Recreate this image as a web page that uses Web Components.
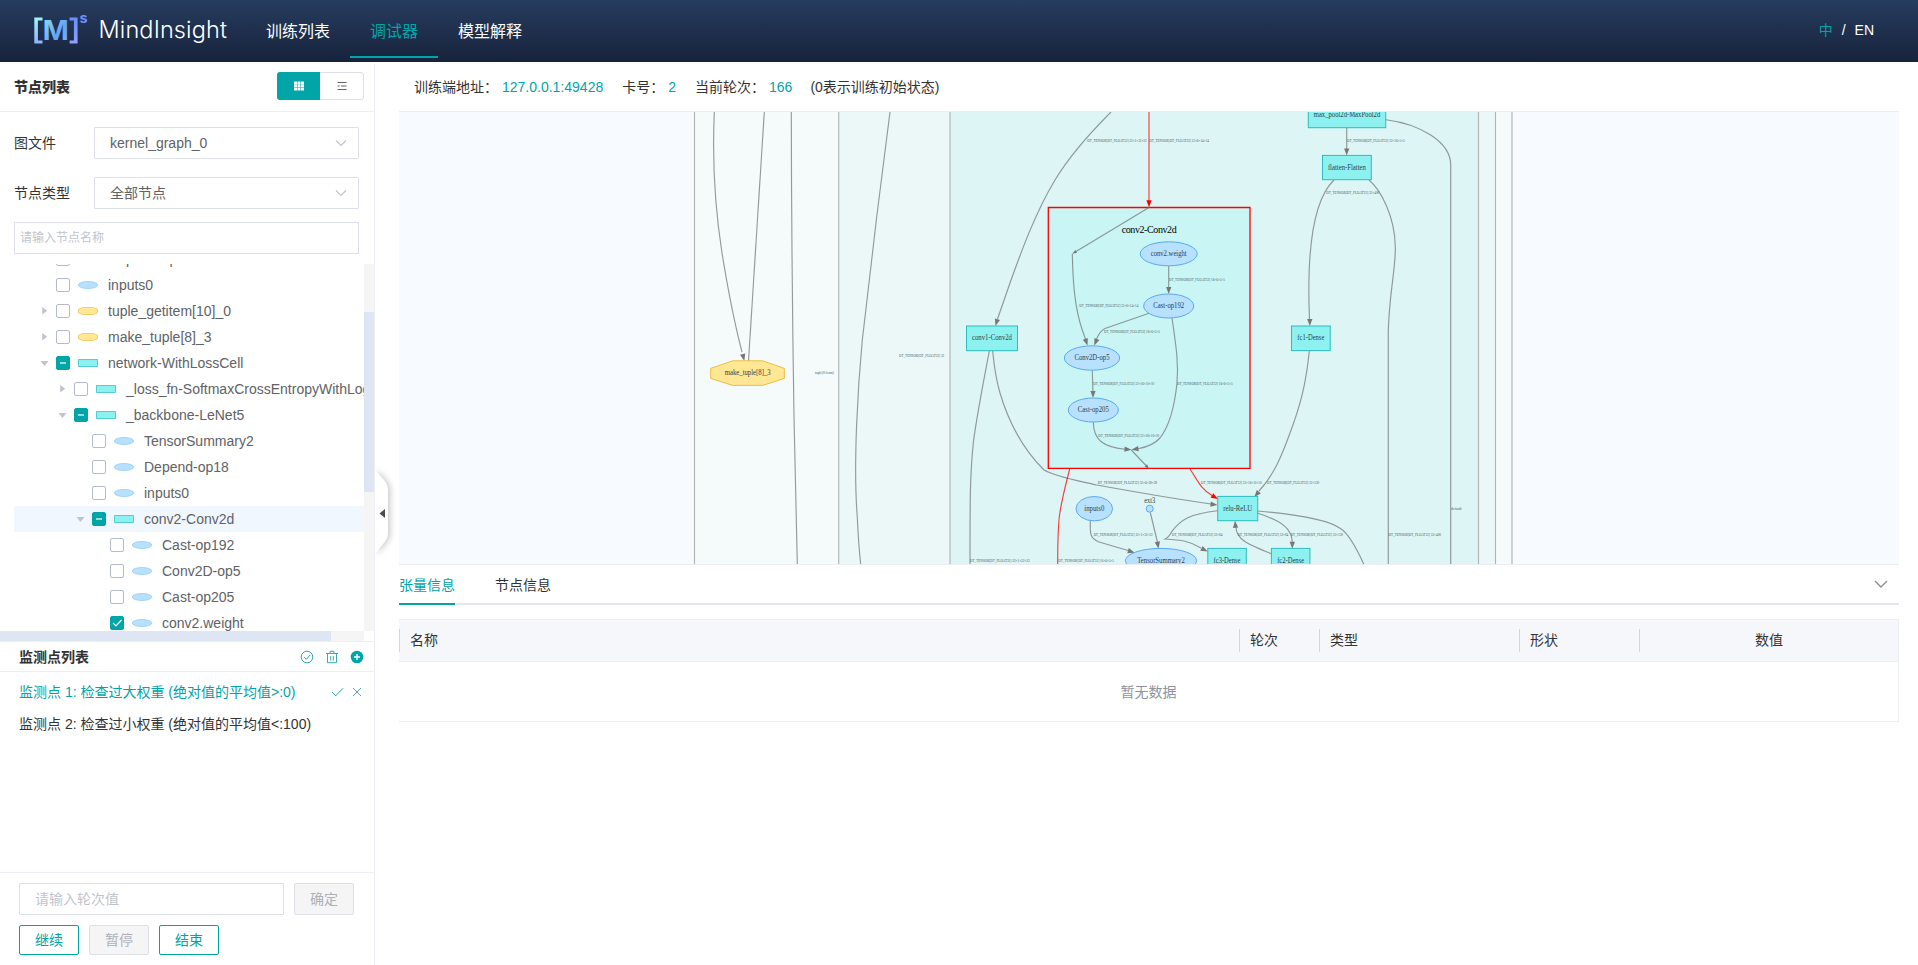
<!DOCTYPE html>
<html lang="zh-CN">
<head>
<meta charset="utf-8">
<title>MindInsight</title>
<style>
html,body{margin:0;height:100%;overflow:hidden}
body{font:14px/20px "Liberation Sans","Noto Sans CJK SC",sans-serif;color:#333;background:#fff;--teal:#00a5a7;--line:#ebeef5;--edge:#dcdfe6}
</style>
</head>
<body>
<mi-app></mi-app>
<script>
const define = (name, html, setup) => {
  const t = document.createElement('template');
  t.innerHTML = html;
  customElements.define(name, class extends HTMLElement {
    connectedCallback() {
      if (this.shadowRoot) return;
      const root = this.attachShadow({mode: 'open'});
      root.append(t.content.cloneNode(true));
      if (setup) setup.call(this, root);
    }
  });
};

define('mi-header', `
<style>
:host{display:flex;align-items:center;height:62px;background:linear-gradient(#273c5f,#17233b);color:#fff;font-size:16px}
.logo{width:246px;height:62px;flex:none}
nav{display:flex;height:62px;flex:1}
nav span{box-sizing:border-box;padding:2px 20px 0;line-height:60px;height:58px;border-bottom:2px solid transparent;white-space:nowrap}
nav .on{color:var(--teal);border-color:var(--teal)}
.lang{display:flex;font-size:14px;line-height:60px;margin-right:44px;gap:9px;height:62px}
.lang b{font-weight:400;color:var(--teal)}
</style>
<svg class="logo" viewBox="0 0 246 62">
 <defs>
  <linearGradient id="a" x1="0" y1="0" x2="0" y2="1"><stop stop-color="#9ff5f7"/><stop offset="1" stop-color="#8fb4fb"/></linearGradient>
  <linearGradient id="m" x1="0" y1="0" x2="1" y2="1"><stop stop-color="#93e3f5"/><stop offset=".6" stop-color="#66a5f2"/><stop offset="1" stop-color="#7fb0f8"/></linearGradient>
  <linearGradient id="c" x1="0" y1="0" x2="0" y2="1"><stop stop-color="#6790f8"/><stop offset="1" stop-color="#8ea0fb"/></linearGradient>
 </defs>
 <path d="M34.300 17.400h8.200v3h-4.600v20.200h4.600v3h-8.200z" fill="url(#a)"/>
 <path d="M77.600 17.400h-8v3h4.300v20.200h-4.300v3h8z" fill="url(#c)"/>
 <text x="42.700" y="39.800" font-family="Inter" font-weight="700" font-size="27" textLength="26" lengthAdjust="spacingAndGlyphs" fill="url(#m)">M</text>
 <text x="79.400" y="23.200" font-family="Inter" font-weight="700" font-size="14.500" fill="#718ffa">s</text>
 <text x="98.500" y="38" font-family="Inter" font-weight="300" font-size="23.500" textLength="128.500" fill="#fff">MindInsight</text>
</svg>
<nav><span>训练列表</span><span class="on">调试器</span><span>模型解释</span></nav>
<div class="lang"><b>中</b><span>/</span><span>EN</span></div>`);

define('mi-select', `
<style>
:host{display:flex;align-items:center;height:32px}
label{width:80px}
div{box-sizing:border-box;flex:1;height:32px;border:1px solid var(--edge);border-radius:1px;display:flex;align-items:center;justify-content:space-between;padding:0 10px 0 15px;color:#606266}
</style>
<label></label><div><slot></slot><svg width="14" height="14" fill="none" stroke="#c0c4cc" stroke-width="1.1"><path d="M2 4.500l5 5 5-5"/></svg></div>`,
function(r){ r.querySelector('label').textContent = this.getAttribute('label'); });

define('mi-node', `
<style>
:host{display:flex;align-items:center;height:26px;color:#606266;white-space:nowrap}
:host([current]){background:#f0f7ff}
.caret{width:24px;height:14px;flex:none}
.box{width:12px;height:12px;flex:none;border:1px solid #b4bccc;border-radius:2px;background:#fff;margin-right:8px}
.box svg{display:none;margin:-1px}
:host([state]) .box{background:var(--teal);border-color:var(--teal)}
:host([state]) .box svg{display:block}
.shape{width:20px;height:14px;margin-right:10px;flex:none}
</style>
<svg class="caret" viewBox="0 0 24 14" fill="#c0c4cc"></svg>
<span class="box"><svg width="14" height="14" fill="none" stroke="#fff"></svg></span>
<svg class="shape" viewBox="0 0 20 14"></svg><slot></slot>`,
function(r){
  this.style.paddingLeft = (18 + 18 * this.getAttribute('level')) + 'px';
  r.querySelector('.caret').innerHTML = {open:'<path d="M8.500 5h8l-4 5z"/>', closed:'<path d="M10.200 3l5 3.700-5 3.700z"/>'}[this.getAttribute('caret')] || '';
  r.querySelector('.box svg').innerHTML = {part:'<path d="M4 7h6" stroke-width="2" stroke="#9adbdc"/>', full:'<path d="M3 7l3 3 5.500-6" stroke-width="1.200"/>'}[this.getAttribute('state')] || '';
  r.querySelector('.shape').innerHTML = {
    op:'<ellipse cx="10" cy="7" rx="9.700" ry="3.500" fill="#b8e0ff" stroke="#94cdf7" stroke-width=".8"/>',
    tuple:'<path d="M.5 5.300L4.500 3.500h11l4 1.800v3.400l-4 1.800h-11l-4-1.800z" fill="#ffe794" stroke="#f2cf68"/>',
    scope:'<path d="M.5 3.500h19v7H.5z" fill="#8df1f0" stroke="#53cfcf"/>'}[this.getAttribute('kind')];
});

define('mi-tree', `
<style>
:host{display:grid;grid-template:367px 10px / 364px 10px;height:377px}
.rows{overflow:hidden;padding-left:14px}
.rows div{margin-top:-18px}
.v{background:#f5f5f5;padding-top:48px}.v i{display:block;height:180px;background:#dfe6f3}
.h{background:#f5f5f5}.h i{display:block;width:331px;height:10px;background:#dfe6f3}
</style>
<div class="rows"><div>
<mi-node level="0" kind="op">Depend-op</mi-node>
<mi-node level="0" kind="op">inputs0</mi-node>
<mi-node level="0" kind="tuple" caret="closed">tuple_getitem[10]_0</mi-node>
<mi-node level="0" kind="tuple" caret="closed">make_tuple[8]_3</mi-node>
<mi-node level="0" kind="scope" caret="open" state="part">network-WithLossCell</mi-node>
<mi-node level="1" kind="scope" caret="closed">_loss_fn-SoftmaxCrossEntropyWithLogits</mi-node>
<mi-node level="1" kind="scope" caret="open" state="part">_backbone-LeNet5</mi-node>
<mi-node level="2" kind="op">TensorSummary2</mi-node>
<mi-node level="2" kind="op">Depend-op18</mi-node>
<mi-node level="2" kind="op">inputs0</mi-node>
<mi-node level="2" kind="scope" caret="open" state="part" current>conv2-Conv2d</mi-node>
<mi-node level="3" kind="op">Cast-op192</mi-node>
<mi-node level="3" kind="op">Conv2D-op5</mi-node>
<mi-node level="3" kind="op">Cast-op205</mi-node>
<mi-node level="3" kind="op" state="full">conv2.weight</mi-node>
</div></div><div class="v"><i></i></div><div class="h"><i></i></div>`);

define('mi-button', `
<style>
:host{box-sizing:border-box;display:flex;align-items:center;justify-content:center;width:60px;height:30px;border:1px solid var(--teal);border-radius:2px;color:var(--teal)}
:host([disabled]){border-color:var(--edge);background:#f5f5f5;color:#adb0b8}
:host([tall]){height:32px}
</style><slot></slot>`);

define('mi-watchpoints', `
<style>
:host{display:flex;flex-direction:column;border-top:1px solid var(--line)}
header{display:flex;align-items:center;justify-content:space-between;height:29px;padding:0 10px 0 19px;border-bottom:1px solid var(--line);font-weight:700}
header div{display:flex;gap:11px}
svg{display:block}
.row{display:flex;align-items:center;justify-content:space-between;height:32px;padding:0 12px 0 19px}
.row.on{color:var(--teal);margin-top:4px}
.row div{display:flex;gap:8px}
</style>
<header>监测点列表<div>
<svg width="14" height="14" fill="none" stroke="#2fa9ab"><circle cx="7" cy="7" r="5.800"/><path d="M4 7l2.300 2.300L10.200 5"/></svg>
<svg width="14" height="14" fill="none" stroke="#3aabad"><path d="M1 3.500h12M5 3V1.300h4V3M2.500 3.500v9.200h9V3.500M5.700 6v4.500M8.300 6v4.500"/></svg>
<svg width="14" height="14" fill="none"><circle cx="7" cy="7" r="6.300" fill="#00a5a7"/><path d="M7 4v6M4 7h6" stroke="#fff" stroke-width="1.300"/></svg>
</div></header>
<div class="row on"><span>监测点 1: 检查过大权重 (绝对值的平均值&gt;:0)</span><div>
<svg width="14" height="12" fill="none" stroke="#2fa0a2"><path d="M2 6l3.700 3.800L13 2.300"/></svg>
<svg width="10" height="12" fill="none" stroke="#5fa5a7"><path d="M1 2l8 8M9 2l-8 8"/></svg></div></div>
<div class="row"><span>监测点 2: 检查过小权重 (绝对值的平均值&lt;:100)</span></div>`);

define('mi-sidebar', `
<style>
:host{display:flex;flex-direction:column;box-sizing:border-box;width:375px;border-right:1px solid var(--line);margin-top:2px}
.top{display:flex;align-items:center;justify-content:space-between;height:47px;padding:0 10px 0 14px;border-bottom:1px solid var(--line);font-weight:700}
.top b{margin-top:-2px}
.toggle{display:flex;box-sizing:border-box;width:87px;height:28px;margin-top:-3px;border:1px solid var(--edge);border-radius:3px}
.toggle span{flex:1;display:flex;align-items:center;justify-content:center}
.toggle .on{background:var(--teal);margin:-1px 0 -1px -1px;border-radius:3px 0 0 3px}
.form{display:flex;flex-direction:column;padding:15px 15px 10px 14px;gap:18px}
.search{height:30px;border:1px solid var(--edge);margin-top:-5px;font-size:12px;line-height:30px;padding-left:5px;color:#c0c4cc}
mi-watchpoints{flex:1}
.foot{border-top:1px solid var(--line);height:82px;padding:10px 0 0 19px;display:flex;flex-direction:column;gap:10px}
.foot div{display:flex;gap:10px}
.foot .input{box-sizing:border-box;width:265px;height:32px;border:1px solid var(--edge);border-radius:1px;line-height:30px;padding-left:15px;color:#c0c4cc}
</style>
<div class="top"><b>节点列表</b><div class="toggle">
<span class="on"><svg width="12" height="10" fill="#fff"><path d="M1 .5h3v2.700H1zM4.500 .5h3v2.700h-3zM8 .5h3v2.700h-3zM1 3.600h3v2.700H1zM4.500 3.600h3v2.700h-3zM8 3.600h3v2.700h-3zM1 6.700h3v2.700H1zM4.500 6.700h3v2.700h-3zM8 6.700h3v2.700h-3z"/></svg></span>
<span><svg width="10" height="8" stroke="#606266" fill="none"><path d="M.5 .5h9M4 4h5.500M.5 7.500h9M.5 4H2.500"/></svg></span></div></div>
<div class="form"><mi-select label="图文件">kernel_graph_0</mi-select><mi-select label="节点类型">全部节点</mi-select><div class="search">请输入节点名称</div></div>
<mi-tree></mi-tree>
<mi-watchpoints></mi-watchpoints>
<div class="foot"><div><span class="input">请输入轮次值</span><mi-button disabled tall>确定</mi-button></div>
<div><mi-button>继续</mi-button><mi-button disabled>暂停</mi-button><mi-button>结束</mi-button></div></div>`);

define('mi-graph', `
<style>
:host{display:block;height:452px;background:#f7faff;border:solid var(--line);border-width:1px 0}
svg{display:block;font-family:"Liberation Serif",serif}
.e path{fill:none;stroke:#6f7474;stroke-width:1.150;stroke-opacity:.72}
.e .r{stroke:#f00;stroke-opacity:.75}
.e .a{fill:#777;stroke:none}.e .ar{fill:#f00;stroke:none}
.n rect{fill:#8df1f0;stroke:#1eb6b8;stroke-opacity:.9}
.n ellipse,.n circle{fill:#b8e0ff;stroke:#5aaaf0}
.n text{font-size:7.200px;text-anchor:middle;fill:#2b4348}
.l text{font-size:3.400px;fill:#4a5a5e}
</style>
<svg width="1500" height="452" viewBox="399 112 1500 452">
<g stroke="#b0b4b4" stroke-width="1.150">
<path d="M694.500 90H1512V600H694.500z" fill="#f5fbfa"/>
<path d="M838.700 90H1495.500V600H838.700z" fill="#ecf8f8"/>
<path d="M950 90H1478.500V600H950z" fill="#ddf5f4"/>
</g>
<path d="M1048.300 207.500H1250V468.400H1048.300z" fill="#c9f5f4" stroke="#f00" stroke-width="1.300"/>
<g class="e"></g><g class="n"></g><g class="l"></g>
<text x="1149.200" y="233.400" font-size="10" text-anchor="middle" textLength="55">conv2-Conv2d</text>
</svg>`,
function(r){
  // [path, class, arrow tip x, y, direction x, y, length]
  const edges = [
    ['M714.300 112C712 165 716 215 722 253C728 290 735 325 742 352','',744.3,361,2.2,9,7],
    ['M764.300 112Q757 220 748.500 361'],
    ['M791.300 112Q791.500 260 794 417L797.300 564'],
    ['M890 112L876.700 217L862.300 340C858 385 853 465 857.300 517Q858.500 545 860.700 564'],
    ['M1111 112C1092 131 1070 155 1055 180C1035 213 1020 255 1010 283L997.500 319','',995.5,326,-2,7,7],
    ['M989.300 351C982 390 976 420 973.300 443C970 475 970 500 970 564'],
    ['M992.700 351Q995 376 1000 393C1008 420 1022 448 1044 470C1056 477 1080 481 1096.700 485C1130 491 1175 499 1211 504','',1217.5,505,7,1,7],
    ['M1149 112V202','r',1149,207.3,0,1,7],
    ['M1149 207.500L1076 251.500','',1072.3,253.7,-3.7,2.2,4.5],
    ['M1072.300 253.700C1073 295 1077 318 1085.500 339','',1087.5,345.5,2,6,7],
    ['M1168.700 266V288','',1168.7,294,0,1,7],
    ['M1149 313.300L1105 328.500Q1100 331 1096.500 339','',1094.3,345.5,-2.4,6,7],
    ['M1172 318C1177 352 1178.500 365 1177 383C1174 412 1167 429 1160 438Q1153 446 1138 448.700','',1131.5,449.7,-6.5,1,7],
    ['M1092.300 370.500L1092.900 392','',1093,398,0,1,7],
    ['M1093.300 422C1093.500 440 1103 447 1125 449.200','',1131.5,449.8,7,.7,7],
    ['M1131.300 450L1146 465.500','',1149,468.7,3,3,4.5],
    ['M1190 469C1198 481 1200 488 1212 495.500','r',1218,499,6,3.5,7],
    ['M1069.700 469C1065 487 1062 499 1060 512Q1057.700 525 1057.700 564','r'],
    ['M1090.300 520.700C1090 534 1090 538 1098.300 541.700Q1113 546 1128 550.500','',1134.7,552.7,7,2.2,7],
    ['M1150.300 512.500L1157.400 542','',1158.5,548.7,1,6,7],
    ['M1217.700 510.700C1190 514 1181 519 1171.700 531.700Q1169 537 1165 539C1181 540 1190 541 1201 548','',1207.7,551.5,6,3,7],
    ['M1258 513.300C1282 521 1292 529 1292.300 542','',1292.3,548.7,0,1,7],
    ['M1271.300 553.700C1247 544 1236 539 1236 527','',1235,520.7,-.5,-6,7],
    ['M1258 511C1303 515 1330 521 1340 528.300Q1350 534 1363.700 564'],
    ['M1309.300 350.700C1306 386 1299 409 1290 433C1282 455 1274 475 1259 491','',1254.3,497,-4.7,5.5,7],
    ['M1334 180C1311 202 1307 260 1309.500 319','',1309.8,326,0,1,7],
    ['M1369 180C1381 190 1395 217 1395.300 247C1396 268 1388 300 1388.300 337V564'],
    ['M1346.700 128V149','',1346.7,155.5,0,1,7],
    ['M1386 119.700C1420 124 1450.700 142 1450.700 165V564']
  ];
  let out = '';
  for (const [d, c, x, y, dx, dy, len] of edges) {
    out += `<path d="${d}" class="${c || ''}"/>`;
    if (x) {
      const h = Math.hypot(dx, dy), u = dx / h, v = dy / h, w = len * .38, bx = x - u * len, by = y - v * len;
      out += `<path class="a${c}" style="stroke:none" d="M${x} ${y}L${bx - v * w} ${by + u * w}L${bx + v * w} ${by - u * w}z"/>`;
    }
  }
  r.querySelector('.e').innerHTML = out;
  const rects = [['conv1-Conv2d',966.5,326,51,24.7,40],['relu-ReLU',1217.7,496.4,40,24.3,29],['fc3-Dense',1207.8,548.4,38.5,24.5,27],['fc2-Dense',1271.4,548.4,38.5,24.5,27],['fc1-Dense',1291.5,326,38.7,24.6,27],['flatten-Flatten',1322.5,155.4,48.8,24.3,38],['max_pool2d-MaxPool2d',1308.3,103,77.4,24.7,66.5]];
  const ovals = [['conv2.weight',1168.7,253.8,28.5,12,36],['Cast-op192',1168.7,306,25,12,31],['Conv2D-op5',1092,358,27.6,12.2,35],['Cast-op205',1093.3,410,25,12,31],['inputs0',1094.3,508.7,18.3,12.2,20],['TensorSummary2',1161,560.7,35.6,12.3,47.5]];
  out = '';
  for (const [t,x,y,w,h,l] of rects) out += `<rect x="${x}" y="${y}" width="${w}" height="${h}"/><text x="${x+w/2}" y="${y+h/2+2}" textLength="${l}" lengthAdjust="spacingAndGlyphs">${t}</text>`;
  for (const [t,x,y,a,b,l] of ovals) out += `<ellipse cx="${x}" cy="${y}" rx="${a}" ry="${b}"/><text x="${x}" y="${y+2}" textLength="${l}" lengthAdjust="spacingAndGlyphs">${t}</text>`;
  out += '<circle cx="1149.700" cy="508.700" r="3.500"/><text x="1149.700" y="503" textLength="11" lengthAdjust="spacingAndGlyphs">ext3</text>';
  out += '<path d="M732.700 360.800h30l21.600 7.600v10l-21.600 7h-30l-22-7v-10z" fill="#ffe794" stroke="#eabf42"/><text x="747.700" y="375" textLength="46" lengthAdjust="spacingAndGlyphs">make_tuple[8]_3</text>';
  r.querySelector('.n').innerHTML = out;
  const T = 'DT_TENSOR[DT_FLOAT32] ';
  const labels = [[T+'32',899,944.3,355.7],['tuple[8 items]',815,834,373],[T+'32×1×32×32',970,1029.7,560.7],[T+'32×1×32×32',1087.3,1146.7,140.7],[T+'32×6×14×14',1149.3,1209,140.7],[T+'32×16×5×5',1347,1404.7,140.7],[T+'32×400',1326.3,1379.3,192.8],[T+'16×6×5×5',1169,1225,279.7],[T+'32×6×14×14',1079.3,1138.3,305.7],[T+'16×6×5×5',1104,1160,331.7],[T+'32×16×10×10',1093.3,1154.3,383.7],[T+'16×6×5×5',1177,1232.7,383.7],[T+'32×16×10×10',1098.3,1159.3,435.8],[T+'32×6×28×28',1097.7,1157,483],[T+'32×16×10×10',1201,1261.7,483],[T+'32×120',1267,1319.3,483],[T+'32×1×32×32',1093.7,1152.7,535],[T+'32×84',1172,1222.3,535],[T+'32×84',1237.7,1288.3,535],[T+'32×120',1290.7,1343,535],[T+'16×6×5×5',1058.3,1114,560.8],[T+'32×400',1388.5,1441,535],['default',1451,1461.7,509]];
  r.querySelector('.l').innerHTML = labels.map(([t,a,b,y]) => `<text x="${a}" y="${y+1}" textLength="${b-a}" lengthAdjust="spacingAndGlyphs">${t}</text>`).join('');
});

define('mi-table', `
<style>
:host{display:block;border:solid var(--line);border-width:1px 1px 1px 0;margin-top:14px}
.head{display:grid;grid-template-columns:840px 80px 200px 120px 1fr;height:41px;align-items:center;background:#f5f7fb;border-bottom:1px solid var(--line)}
.head span{border-left:1px solid #d4d6db;height:23px;line-height:22px;padding-left:10px}
.head span:last-child{text-align:center;padding:0}
.empty{height:59px;line-height:60px;text-align:center;color:#909399}
</style>
<div class="head"><span>名称</span><span>轮次</span><span>类型</span><span>形状</span><span>数值</span></div>
<div class="empty">暂无数据</div>`);

define('mi-main', `
<style>
:host{display:block;width:1500px;margin-left:24px}
.info{display:flex;height:49px;line-height:50px;padding-left:15px;white-space:nowrap}
.info b{font-weight:400;color:var(--teal);margin:0 19px 0 4px}
.info b:last-of-type{margin-right:18px}
.tabs{display:flex;align-items:center;height:38px;border-bottom:2px solid #e4e7ed;gap:40px}
.tabs span{height:38px;line-height:40px;border-bottom:2px solid transparent;margin-bottom:-2px}
.tabs .on{color:var(--teal);border-color:var(--teal)}
.tabs svg{margin-left:auto;margin-right:10px}
</style>
<div class="info">训练端地址：<b>127.0.0.1:49428</b>卡号：<b>2</b>当前轮次：<b>166</b>(0表示训练初始状态)</div>
<mi-graph></mi-graph>
<div class="tabs"><span class="on">张量信息</span><span>节点信息</span><svg width="16" height="12" fill="none" stroke="#8c8f94" stroke-width="1.400"><path d="M2 3l6 6 6-6"/></svg></div>
<mi-table></mi-table>`);

define('mi-app', `
<style>
:host{display:block;height:965px;position:relative}
.body{display:flex;height:903px}
.fold{position:absolute;left:375px;top:470px;overflow:visible;filter:drop-shadow(2px 0 3px rgba(0,0,0,.22));clip-path:inset(-10px -12px -10px 0)}
</style>
<mi-header></mi-header>
<div class="body"><mi-sidebar></mi-sidebar><mi-main></mi-main></div>
<svg class="fold" width="14" height="86"><path d="M0 0L9 10Q13 15 13 20V63Q13 68 9 73L0 84z" fill="#fff"/><path d="M4.500 43.500L10 39v9z" fill="#4a4d55"/></svg>`);
</script>
</body>
</html>
